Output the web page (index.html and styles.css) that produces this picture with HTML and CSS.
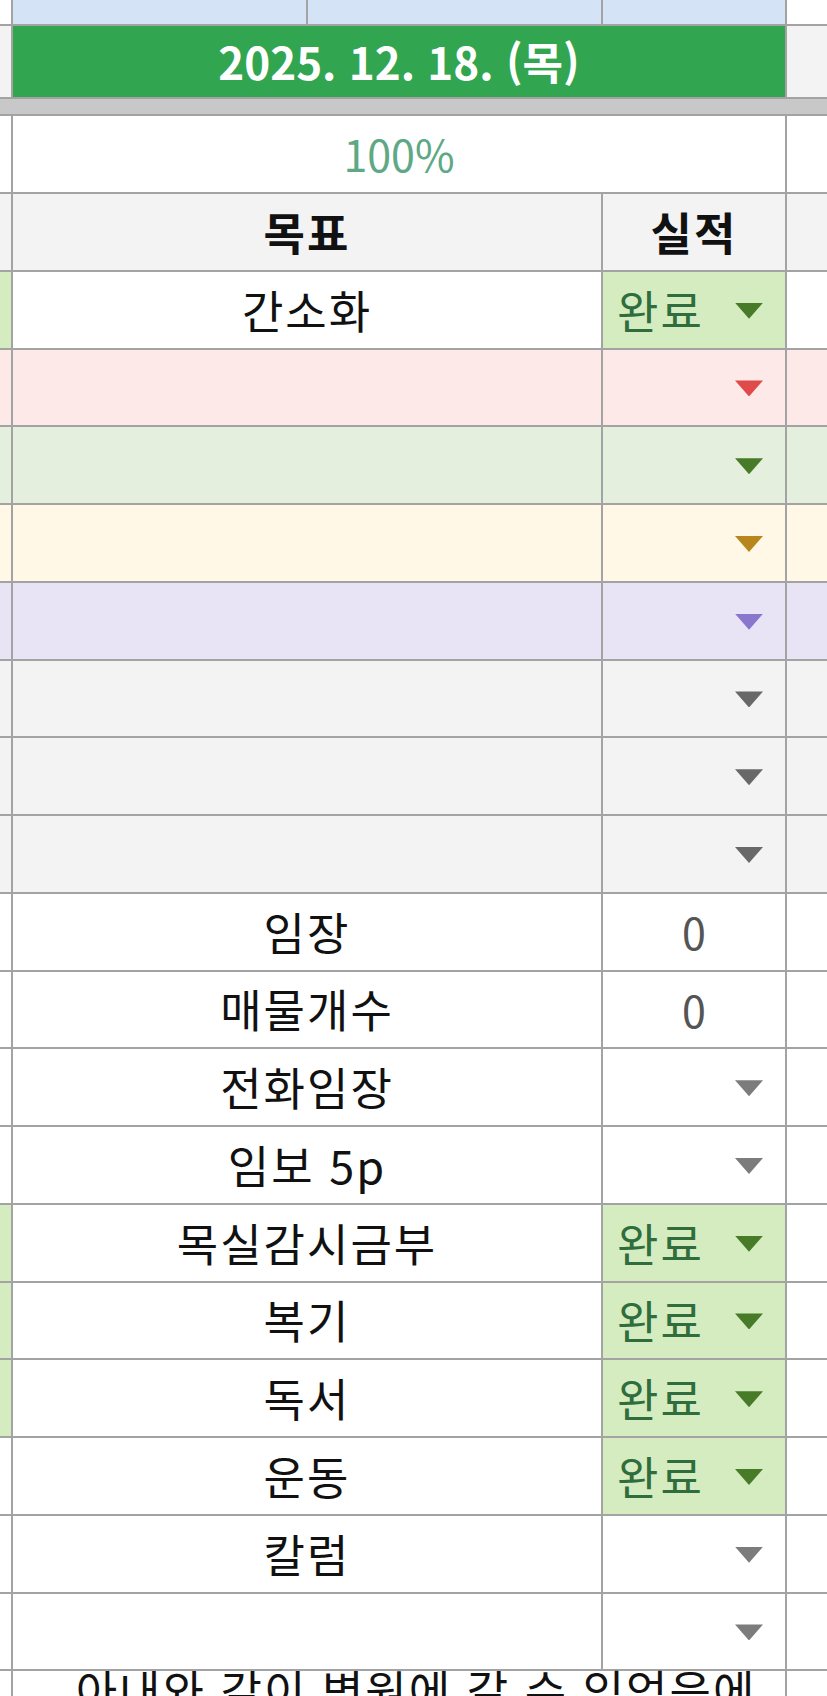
FILE: index.html
```html
<!DOCTYPE html>
<html lang="ko">
<head>
<meta charset="utf-8">
<title>Sheet</title>
<link rel="stylesheet" href="styles.css">
</head>
<body>
<div class="sheet">
  <!-- row A -->
  <div class="c white"></div>
  <div class="c blue"></div>
  <div class="c blue"></div>
  <div class="c blue"></div>
  <div class="c white"></div>

  <!-- date bar -->
  <div class="c hgray"></div>
  <div class="c date span3">2025. 12. 18. (목)</div>
  <div class="c hgray"></div>

  <!-- freeze band -->
  <div class="band"></div>

  <!-- percent -->
  <div class="c white"></div>
  <div class="c pct span3">100%</div>
  <div class="c white"></div>

  <!-- header -->
  <div class="c hgray"></div>
  <div class="c head span2">목표</div>
  <div class="c head">실적</div>
  <div class="c hgray"></div>

  <!-- 간소화 -->
  <div class="c chip"></div>
  <div class="c label span2">간소화</div>
  <div class="c status chip"><span class="done">완료</span><span class="dd g"></span></div>
  <div class="c white"></div>

  <!-- colored empty rows -->
  <div class="c pink"></div>
  <div class="c label span2 pink"></div>
  <div class="c status end pink"><span class="dd r"></span></div>
  <div class="c pink"></div>

  <div class="c lgreen"></div>
  <div class="c label span2 lgreen"></div>
  <div class="c status end lgreen"><span class="dd g"></span></div>
  <div class="c lgreen"></div>

  <div class="c yellow"></div>
  <div class="c label span2 yellow"></div>
  <div class="c status end yellow"><span class="dd y"></span></div>
  <div class="c yellow"></div>

  <div class="c purple"></div>
  <div class="c label span2 purple"></div>
  <div class="c status end purple"><span class="dd p"></span></div>
  <div class="c purple"></div>

  <div class="c hgray"></div>
  <div class="c label span2 hgray"></div>
  <div class="c status end hgray"><span class="dd k"></span></div>
  <div class="c hgray"></div>

  <div class="c hgray"></div>
  <div class="c label span2 hgray"></div>
  <div class="c status end hgray"><span class="dd k"></span></div>
  <div class="c hgray"></div>

  <div class="c hgray"></div>
  <div class="c label span2 hgray"></div>
  <div class="c status end hgray"><span class="dd k"></span></div>
  <div class="c hgray"></div>

  <!-- 임장 -->
  <div class="c white"></div>
  <div class="c label span2">임장</div>
  <div class="c status num">0</div>
  <div class="c white"></div>

  <div class="c white"></div>
  <div class="c label span2">매물개수</div>
  <div class="c status num">0</div>
  <div class="c white"></div>

  <div class="c white"></div>
  <div class="c label span2">전화임장</div>
  <div class="c status end"><span class="dd lk"></span></div>
  <div class="c white"></div>

  <div class="c white"></div>
  <div class="c label span2">임보 5p</div>
  <div class="c status end"><span class="dd lk"></span></div>
  <div class="c white"></div>

  <div class="c chip"></div>
  <div class="c label span2">목실감시금부</div>
  <div class="c status chip"><span class="done">완료</span><span class="dd g"></span></div>
  <div class="c white"></div>

  <div class="c chip"></div>
  <div class="c label span2">복기</div>
  <div class="c status chip"><span class="done">완료</span><span class="dd g"></span></div>
  <div class="c white"></div>

  <div class="c chip"></div>
  <div class="c label span2">독서</div>
  <div class="c status chip"><span class="done">완료</span><span class="dd g"></span></div>
  <div class="c white"></div>

  <div class="c white"></div>
  <div class="c label span2">운동</div>
  <div class="c status chip"><span class="done">완료</span><span class="dd g"></span></div>
  <div class="c white"></div>

  <div class="c white"></div>
  <div class="c label span2">칼럼</div>
  <div class="c status end"><span class="dd lk"></span></div>
  <div class="c white"></div>

  <div class="c white"></div>
  <div class="c label span2"></div>
  <div class="c status end"><span class="dd lk"></span></div>
  <div class="c white"></div>

  <!-- note -->
  <div class="c white"></div>
  <div class="c note span3">아내와 같이 병원에 갈 수 있었음에</div>
  <div class="c white"></div>
</div>
</body>
</html>
```

FILE: styles.css
```css
html, body {
  margin: 0;
  padding: 0;
  overflow: hidden;
  background: #ffffff;
}

.sheet {
  display: grid;
  grid-template-columns: 11px 293px 293px 182px 40px;
  grid-template-rows: 24px 71px 15px 76px repeat(19, 75.75px) 100px;
  gap: 2px;
  background: #a3a3a3;
  width: 827px;
  font-family: "Noto Sans CJK KR", "Noto Sans", sans-serif;
  font-size: 43px;
  color: #111;
}

.c {
  background: #ffffff;
  display: flex;
  align-items: center;
  justify-content: center;
  line-height: 1.2;
  min-width: 0;
  overflow: hidden;
}

.span2 { grid-column: span 2; }
.span3 { grid-column: span 3; }

.white { background: #ffffff; }
.blue { background: #d5e3f7; }
.hgray { background: #f3f3f3; }
.chip { background: #d5ecc0; }
.pink { background: #fde9e8; }
.lgreen { background: #e5efde; }
.yellow { background: #fff8e6; }
.purple { background: #e8e4f6; }

.band {
  grid-column: 1 / -1;
  background: #c8c8c8;
}

.date {
  background: #32a550;
  color: #ffffff;
  font-weight: 700;
  font-size: 44px;
}

.pct {
  color: #5ea886;
  font-weight: 400;
}

.head {
  background: #f3f3f3;
  font-weight: 700;
  font-size: 45px;
  letter-spacing: 2px;
}

.label {
  color: #111;
  font-size: 45px;
  letter-spacing: 2px;
}

.status {
  justify-content: space-between;
  padding: 0 22px 0 14px;
}

.status.end {
  justify-content: flex-end;
}

.status.num {
  justify-content: center;
  padding: 0;
  color: #555;
}

.done {
  color: #2f6d3d;
  font-size: 45px;
  letter-spacing: 2px;
}

.dd {
  display: block;
  width: 28px;
  height: 16px;
  margin-top: 2px;
  clip-path: polygon(0 0, 100% 0, 50% 100%);
}

.dd.g { background: #477b27; }
.dd.r { background: #e04a4a; }
.dd.y { background: #b7861c; }
.dd.p { background: #8a76cc; }
.dd.k { background: #686868; }
.dd.lk { background: #7c7c7c; }

.note {
  align-items: flex-start;
  font-size: 45px;
  letter-spacing: 2px;
  line-height: 38px;
  padding-left: 34px;
  white-space: nowrap;
  overflow: visible;
}
```
